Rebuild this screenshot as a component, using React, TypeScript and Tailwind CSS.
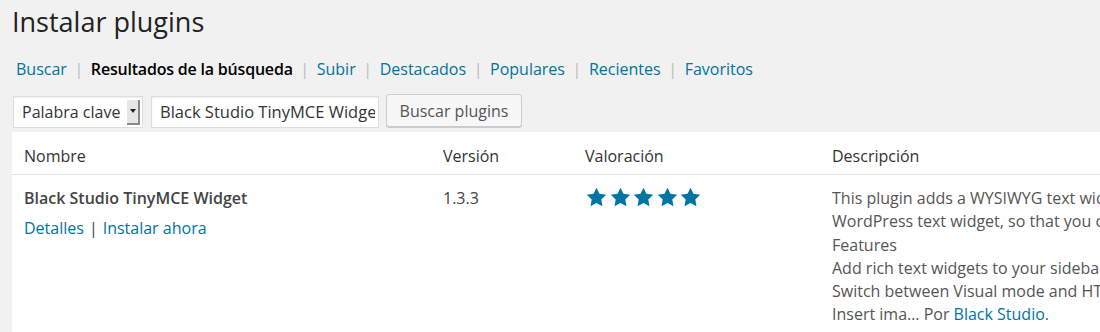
const font = { fontFamily: '"Open Sans", "Liberation Sans", sans-serif' };

function Star() {
  return (
    <svg width="21" height="20" viewBox="0 0 24 23" aria-hidden>
      <path
        d="M12 0.8l3.4 7.1 7.8 1.1-5.7 5.4 1.4 7.7L12 18.4l-6.9 3.7 1.4-7.7L0.8 9l7.8-1.1z"
        fill="#0074a2"
      />
    </svg>
  );
}

const tabs = ['Buscar', 'Resultados de la búsqueda', 'Subir', 'Destacados', 'Populares', 'Recientes', 'Favoritos'];

export default function App() {
  return (
    <div
      className="h-[332px] w-[1100px] overflow-hidden bg-[#f1f1f1] text-[16px] text-[#444]"
      style={font}
    >
      <div className="pl-[12px]">
        <h1 className="pt-[3px] text-[27px] leading-[38px] font-normal text-[#222]">Instalar plugins</h1>

        <ul className="mt-[17px] flex items-center pl-[4px] text-[16px] leading-[22px]">
          {tabs.map((t, i) => (
            <li key={t} className="flex items-center">
              {i > 0 && <span className="px-[7.6px] text-[#bbb]">|</span>}
              {i === 1 ? (
                <span className="font-semibold tracking-[-0.2px] text-black">{t}</span>
              ) : (
                <a className="text-[#0074a2]">{t}</a>
              )}
            </li>
          ))}
        </ul>

        <div className="mt-[14px] flex items-start pl-[1px]">
          <div className="mt-[2px] flex h-[32px] w-[130px] shrink-0 items-center justify-between border border-[#ddd] bg-white pl-[8px] pr-[2px] shadow-[inset_0_1px_2px_rgba(0,0,0,0.07)]">
            <span className="text-[#333]">Palabra clave</span>
            <span className="flex h-[25px] w-[13px] items-center justify-center border-r-2 border-b-2 border-[#888] bg-[#e6e6e6]">
              <span className="h-0 w-0 border-x-[3px] border-t-[4px] border-x-transparent border-t-[#222]" />
            </span>
          </div>
          <div className="ml-[8px] mt-[2px] flex h-[32px] w-[228px] shrink-0 items-center border border-[#ddd] bg-white pl-[8px] pr-[3px] text-[16.5px] text-[#333] shadow-[inset_0_1px_2px_rgba(0,0,0,0.07)]">
            <div className="flex-1 overflow-hidden whitespace-nowrap">Black Studio TinyMCE Widget</div>
          </div>
          <button className="ml-[7px] h-[33px] w-[136px] shrink-0 rounded-[3px] border border-[#ccc] bg-[#f7f7f7] text-[#555] shadow-[0_1px_0_#ccc]">
            Buscar plugins
          </button>
        </div>

        <div className="mt-[4px] w-[1200px] bg-white">
          <div className="flex h-[43px] items-start border-b border-[#e1e1e1] pt-[13px] leading-[22px] text-[#333]">
            <div className="w-[419px] shrink-0 pl-[12px]">Nombre</div>
            <div className="w-[142px] shrink-0 pl-[12px]">Versión</div>
            <div className="w-[247px] shrink-0 pl-[12px]">Valoración</div>
            <div className="pl-[12px]">Descripción</div>
          </div>
          <div className="flex pt-[12px] pb-[10px] leading-[23.3px]">
            <div className="w-[419px] shrink-0 pl-[12px]">
              <div className="font-semibold text-[#444]">Black Studio TinyMCE Widget</div>
              <div className="mt-[7px]">
                <a className="text-[#0074a2]">Detalles</a>
                <span className="px-[5px] text-[#444]">|</span>
                <a className="text-[#0074a2]">Instalar ahora</a>
              </div>
            </div>
            <div className="w-[142px] shrink-0 pl-[12px]">1.3.3</div>
            <div className="w-[247px] shrink-0 pl-[13px]">
              <div className="flex gap-[2.5px]">
                <Star />
                <Star />
                <Star />
                <Star />
                <Star />
              </div>
            </div>
            <div className="shrink-0 whitespace-nowrap pl-[12px] text-[#555]">
              <div>This plugin adds a WYSIWYG text widget based on the standard</div>
              <div>WordPress text widget, so that you can add rich text.</div>
              <div>Features</div>
              <div>Add rich text widgets to your sidebars</div>
              <div>Switch between Visual mode and HTML mode</div>
              <div>
                Insert ima… Por <a className="text-[#0074a2]">Black Studio</a>.
              </div>
            </div>
          </div>
        </div>
      </div>
    </div>
  );
}
